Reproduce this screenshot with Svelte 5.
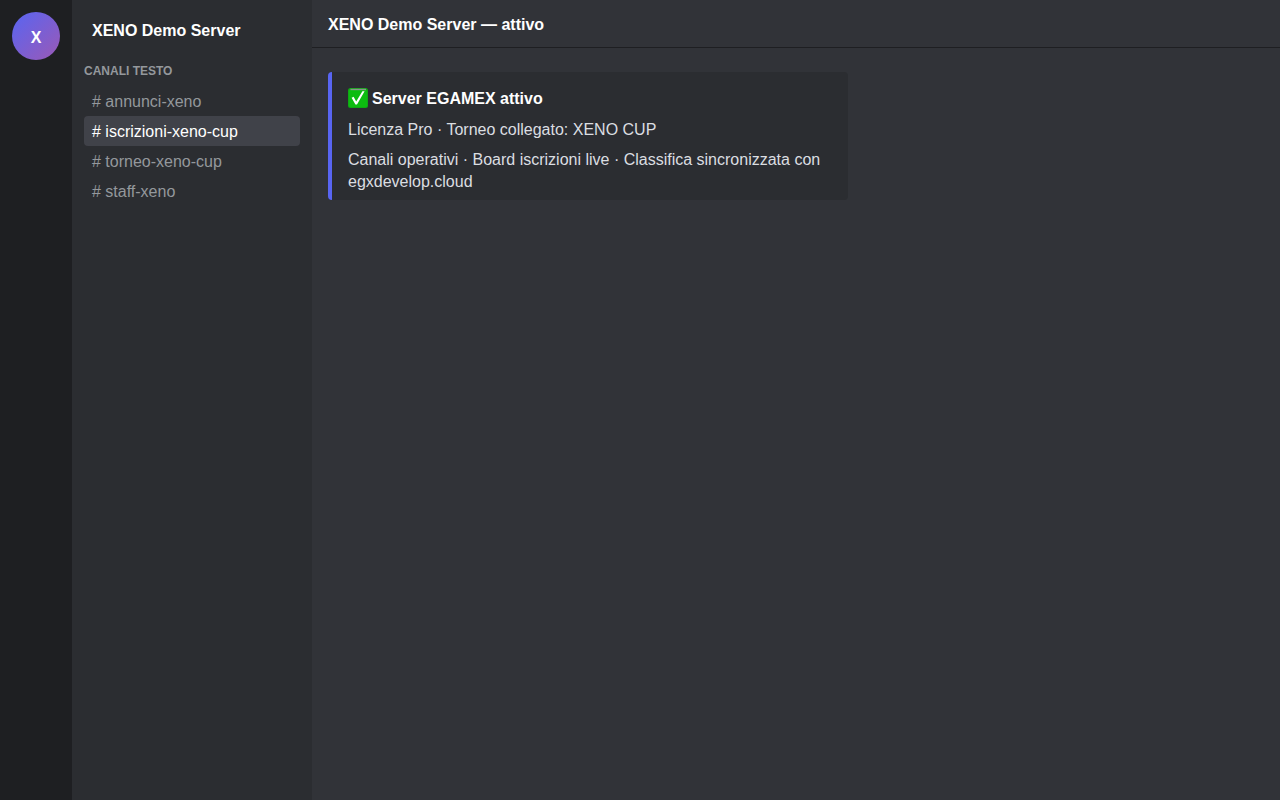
<script>
  const server = 'XENO Demo Server'

  const channels = ['annunci-xeno', 'iscrizioni-xeno-cup', 'torneo-xeno-cup', 'staff-xeno']

  let active = $state('iscrizioni-xeno-cup')
</script>

<div class="app">
  <nav class="servers" aria-label="Server">
    <button class="server" aria-label={server}>X</button>
  </nav>

  <aside class="channels">
    <h2>{server}</h2>
    <h3>CANALI TESTO</h3>
    {#each channels as channel}
      <button class="channel" class:active={channel === active} onclick={() => (active = channel)}>
        # {channel}
      </button>
    {/each}
  </aside>

  <main>
    <header>{server} — attivo</header>
    <article class="embed">
      <h4>
        <svg viewBox="0 0 20 20" aria-hidden="true">
          <rect width="20" height="20" rx="2.5" fill="#0fa814" />
          <rect x="1" y="1" width="18" height="18" rx="1.5" fill="#0cbc10" />
          <path d="M2.5 1.5h15.5" fill="none" stroke="#8a968c" stroke-width="1.4" />
          <path d="M3.6 9.8 5.6 8.8 8.2 13.4 14.4 3.2 16.6 3.2 9 16.6 7.4 16.6Z" fill="#fff" />
        </svg>
        Server EGAMEX attivo
      </h4>
      <p>Licenza Pro · Torneo collegato: XENO CUP</p>
      <p>Canali operativi · Board iscrizioni live · Classifica sincronizzata con egxdevelop.cloud</p>
    </article>
  </main>
</div>

<style>
  :global(body) {
    margin: 0;
    background: #313338;
  }

  .app {
    display: flex;
    min-height: 100vh;
    color: #dbdee1;
    font-family: 'Liberation Sans', Arial, sans-serif;
    font-size: 16px;
    line-height: 18px;
  }

  h2,
  h3,
  h4,
  p {
    margin: 0;
  }

  button {
    border: 0;
    font: inherit;
    cursor: pointer;
  }

  .servers {
    box-sizing: border-box;
    flex: none;
    width: 72px;
    padding: 12px;
    background: #1e1f22;
  }

  .server {
    width: 48px;
    height: 48px;
    padding: 3px 0 0;
    border-radius: 50%;
    background: linear-gradient(135deg, #5865f2, #9b59b6);
    color: #fff;
    font-weight: 700;
  }

  .channels {
    box-sizing: border-box;
    display: flex;
    flex: none;
    flex-direction: column;
    width: 240px;
    padding: 12px;
    background: #2b2d31;
  }

  h2 {
    padding: 10px 8px 8px;
    color: #fff;
    font-size: 16px;
  }

  h3 {
    margin: 16px 0 8px;
    color: #94989c;
    font-size: 12px;
    line-height: 14px;
  }

  .channel {
    padding: 7px 8px 5px;
    border-radius: 4px;
    background: none;
    color: #94989c;
    text-align: left;
  }

  .channel.active {
    background: #404249;
    color: #fff;
  }

  main {
    flex: 1;
    min-width: 0;
  }

  header {
    padding: 16px 16px 13px;
    border-bottom: 1px solid #1e1f22;
    color: #fff;
    font-weight: 700;
  }

  .embed {
    box-sizing: border-box;
    max-width: 520px;
    margin: 24px 16px;
    padding: 16px 16px 7px;
    border-left: 4px solid #5865f2;
    border-radius: 4px;
    background: #2b2d31;
  }

  h4 {
    display: flex;
    gap: 4px;
    padding-bottom: 1px;
    color: #fff;
    font-size: 16px;
    line-height: 22px;
  }

  h4 svg {
    width: 20px;
    height: 20px;
  }

  p {
    margin-top: 8px;
    line-height: 22px;
  }
</style>
